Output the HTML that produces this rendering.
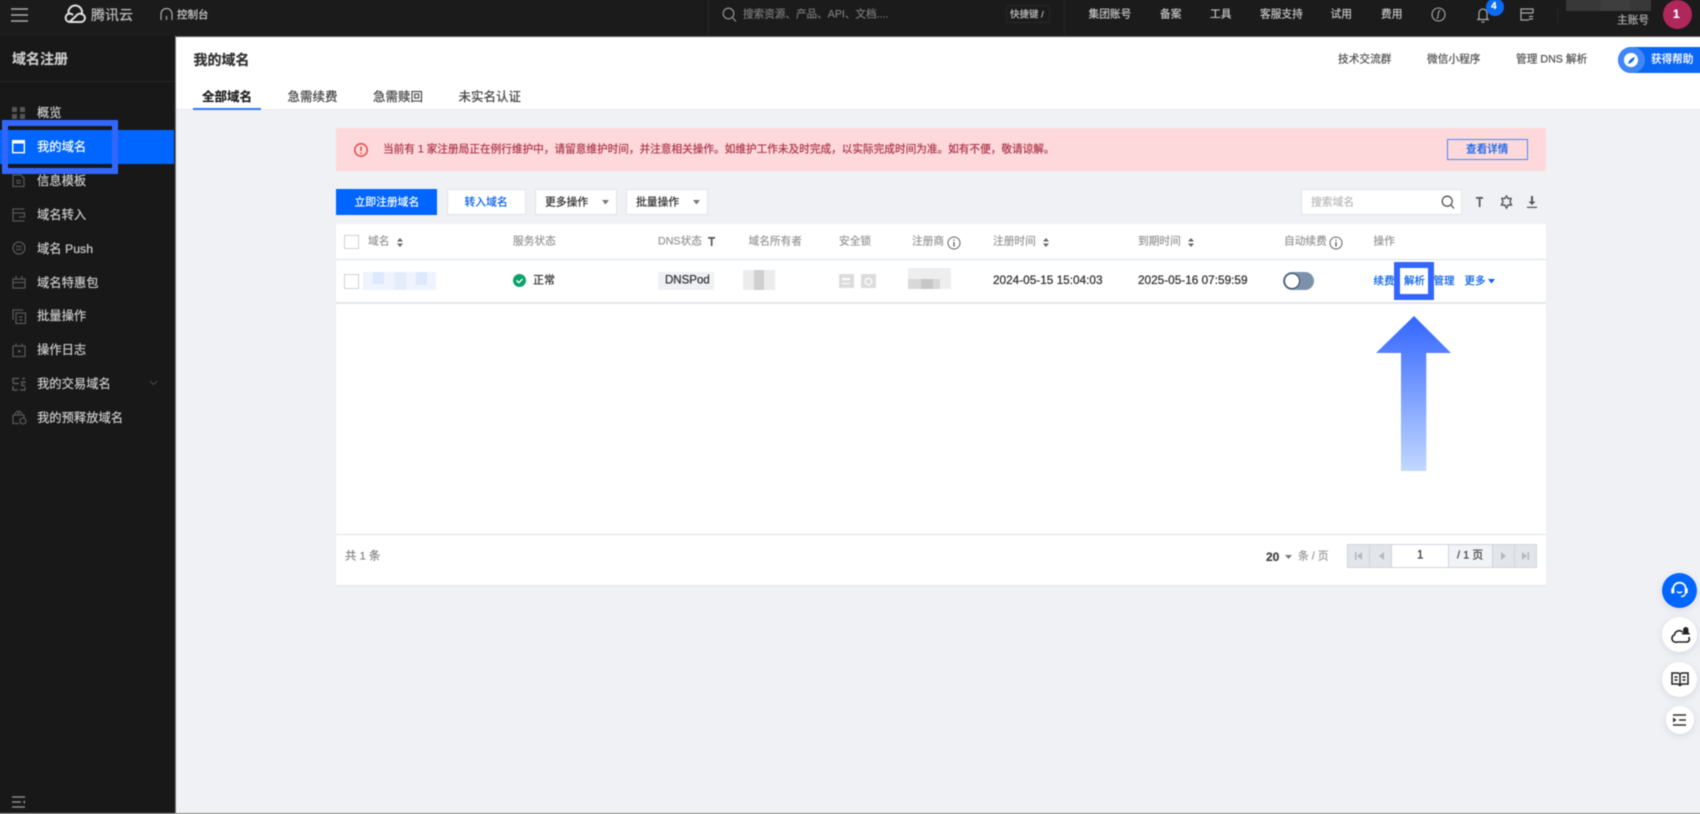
<!DOCTYPE html>
<html lang="zh-CN"><head><meta charset="utf-8"><title>我的域名</title>
<style>
*{box-sizing:border-box;margin:0;padding:0}
html{background:#f0f1f5}
html,body{width:1700px;height:814px;overflow:hidden}
body{position:relative;font-family:"Liberation Sans","Noto Sans CJK SC",sans-serif;font-size:12px;color:#333}
#w{position:absolute;left:0;top:0;width:1700px;height:814px;filter:blur(.4px)}
.a{position:absolute}
.t{position:absolute;white-space:nowrap;line-height:1;transform:translateY(-50%);text-shadow:0 0 .6px currentColor}
.m{font-size:12.3px;color:#c8c8c8;left:37px}
.n{font-size:10.7px;color:#c4c4c4;top:14.5px}
.h{font-size:10.7px;color:#999;top:242px}
.l{font-size:10.5px;color:#0b62e8;top:281px}
.r{font-size:10.7px;color:#555;top:60px}
.tb{font-size:12.5px;color:#444;top:97px}
svg{position:absolute;display:block;overflow:visible}
.b{position:absolute;top:189px;height:26px;background:#fff;border:1px solid #dfe3e9}
.p{position:absolute;top:544px;height:24px;background:#e2e5ea;border:1px solid #cfd5de}
</style></head><body><div id="w">

<!-- top bar -->
<div class="a" style="left:-6px;top:-6px;width:1712px;height:42px;background:#1b1b1b"></div>
<div class="a" style="left:-6px;top:36px;width:1712px;height:1px;background:#555"></div>
<svg style="left:11px;top:8px" width="18" height="14" fill="none" stroke="#aaa" stroke-width="1.4"><path d="M0 1h17M0 7h17M0 13h17"/></svg>
<svg style="left:64px;top:6px" width="22" height="17" viewBox="0 0 22 17" fill="none" stroke="#e2e2e2" stroke-width="2"><path d="M5.500 16H17a4 4 0 0 0 .8-7.900A6.800 6.800 0 1 0 4.600 7.800 4.200 4.200 0 0 0 5.500 16z"/><path d="M5.500 16l6.500-6a4.500 4.500 0 0 1 5.800-1.900M4.600 7.800A4.500 4.500 0 0 1 9 9"/></svg>
<div class="t" style="left:91px;top:15px;font-size:14px;color:#bbb">腾讯云</div>
<svg style="left:160px;top:8px" width="13" height="13" fill="none" stroke="#aaa" stroke-width="1.2"><path d="M1 12V6a5.500 5.500 0 0 1 11 0v6M6.500 8v4"/></svg>
<div class="t" style="left:177px;top:14.5px;font-size:10.5px;color:#ccc">控制台</div>
<div class="a" style="left:708px;top:-6px;width:1px;height:42px;background:#262626"></div>
<svg style="left:722px;top:7px" width="15" height="15" fill="none" stroke="#8a8a8a" stroke-width="1.300"><circle cx="6.500" cy="6.500" r="5.300"/><path d="M10.500 10.500l3.500 4"/></svg>
<div class="t" style="left:743px;top:14.5px;font-size:10.6px;color:#777">搜索资源、产品、API、文档....</div>
<div class="a" style="left:1006px;top:5px;width:44px;height:18px;border:1px solid #262626"></div>
<div class="t" style="left:1010px;top:14.5px;font-size:9.5px;color:#bbb">快捷键 /</div>
<div class="a" style="left:1064px;top:-6px;width:1px;height:42px;background:#262626"></div>
<div class="t n" style="left:1088.500px">集团账号</div>
<div class="t n" style="left:1160px">备案</div>
<div class="t n" style="left:1210px">工具</div>
<div class="t n" style="left:1260px">客服支持</div>
<div class="t n" style="left:1330.500px">试用</div>
<div class="t n" style="left:1381px">费用</div>
<svg style="left:1431px;top:7px" width="15" height="15" fill="none" stroke="#aaa" stroke-width="1.100"><circle cx="7.500" cy="7.500" r="6.500"/><path d="M9.500 3.500c-2 0-2 1.500-2.300 4S7 11.500 5.500 11.500"/></svg>
<svg style="left:1476px;top:7px" width="14" height="16" fill="none" stroke="#aaa" stroke-width="1.200"><path d="M1 12.500h12M3 12V6a4 4 0 0 1 8 0v6M5.500 15h3"/></svg>
<div class="a" style="left:1486px;top:-2px;width:18px;height:18px;border-radius:9px;background:#0a6bf2"></div>
<div class="t" style="left:1491px;top:7px;font-size:10px;font-weight:700;color:#fff">4</div>
<svg style="left:1520px;top:8px" width="14" height="13" fill="none" stroke="#aaa" stroke-width="1.200"><path d="M13 5V1H1v11h8M1 5h12M9 8.500h4M9 11h4"/></svg>
<div class="a" style="left:1557px;top:7px;width:1px;height:16px;background:#2a2a2a"></div>
<div class="a" style="left:1566px;top:-6px;width:85px;height:17px;background:#383838"></div>
<div class="a" style="left:1600px;top:-6px;width:30px;height:17px;background:#3e3e3e"></div>
<div class="t" style="left:1617px;top:21px;font-size:10.7px;color:#aaa">主账号</div>
<div class="a" style="left:1662.500px;top:0;width:29px;height:29px;border-radius:50%;background:#b0275b"></div>
<div class="t" style="left:1673px;top:14px;font-size:12px;font-weight:700;color:#fff">1</div>

<!-- sidebar -->
<div class="a" style="left:-6px;top:36px;width:181px;height:784px;background:#181818"></div>
<div class="a" style="left:175px;top:36px;width:1px;height:784px;background:#777"></div>
<div class="a" style="left:-6px;top:813px;width:1712px;height:6px;background:#999"></div>
<div class="a" style="left:0;top:81px;width:175px;height:1px;background:#282828"></div>
<div class="t" style="left:12px;top:58.500px;font-size:14px;font-weight:700;color:#c8c8c8">域名注册</div>
<div class="a" style="left:-6px;top:130px;width:180px;height:33.500px;background:#0066ff"></div>

<svg style="left:12px;top:107px" width="14" height="13" fill="#555"><path d="M0 0h5v5H0zM8 0h5v5H8zM0 7h5v5H0zM8 7h5v5H8z"/></svg>
<div class="t m" style="top:113px">概览</div>
<svg style="left:12px;top:140px" width="14" height="14"><rect x=".7" y=".7" width="11.600" height="12" fill="none" stroke="#fff" stroke-width="1.400"/><rect x="0" y="0" width="13" height="3.500" fill="#fff"/></svg>
<div class="t m" style="top:147px;color:#fff">我的域名</div>
<svg style="left:12px;top:174px" width="14" height="14" fill="none" stroke="#555" stroke-width="1.300"><path d="M1 1h8l3 3v8.500H1zM4 6.500h5M4 9h5"/></svg>
<div class="t m" style="top:181px">信息模板</div>
<svg style="left:12px;top:208px" width="14" height="14" fill="none" stroke="#555" stroke-width="1.300"><path d="M12.500 1H1v12h11.500M1 5h11.500v4H7"/></svg>
<div class="t m" style="top:215px">域名转入</div>
<svg style="left:12px;top:241px" width="15" height="15" fill="none" stroke="#555" stroke-width="1.300"><circle cx="7" cy="7" r="6"/><path d="M4 5.500h6M4 8.500h6"/></svg>
<div class="t m" style="top:248.500px">域名 Push</div>
<svg style="left:12px;top:275px" width="15" height="15" fill="none" stroke="#555" stroke-width="1.300"><path d="M1 4h12v9H1zM1 7.500h12M4 1v3M10 1v3"/></svg>
<div class="t m" style="top:282.500px">域名特惠包</div>
<svg style="left:12px;top:309px" width="15" height="15" fill="none" stroke="#555" stroke-width="1.300"><path d="M1 11V1h10M4 4h9.500v10.500H4zM7 8h3.500M7 11h3.500"/></svg>
<div class="t m" style="top:316px">批量操作</div>
<svg style="left:12px;top:343px" width="15" height="15" fill="none" stroke="#555" stroke-width="1.300"><path d="M1 3h12v10.500H1zM4 .500v3M10 .500v3"/><rect x="6" y="7" width="2.500" height="2.500" fill="#555" stroke="none"/></svg>
<div class="t m" style="top:350px">操作日志</div>
<svg style="left:12px;top:377px" width="15" height="15" fill="none" stroke="#555" stroke-width="1.500"><path d="M1 6V1.500h6M13 1.500h-3M1 6.500h6M13 6V5h-3v3.500h3M1 9v4h5M8 13h5V10"/></svg>
<div class="t m" style="top:384px">我的交易域名</div>
<svg style="left:149px;top:380px" width="9" height="6" fill="none" stroke="#444" stroke-width="1.200"><path d="M1 1l3.500 3.500L8 1"/></svg>
<svg style="left:12px;top:410px" width="15" height="15" fill="none" stroke="#555" stroke-width="1.300"><path d="M1 5h11v3M1 5v8.500h6M3 5c0-5 7-5 7 0M6.500 1v4"/><circle cx="11" cy="11" r="3" /></svg>
<div class="t m" style="top:417.500px">我的预释放域名</div>
<svg style="left:12px;top:796px" width="14" height="12" fill="none" stroke="#888" stroke-width="1.600"><path d="M0 1h13M0 6h9M0 11h13"/><path d="M13 4v4l-2-2z" fill="#888" stroke="none"/></svg>

<!-- blue highlight sidebar -->
<div class="a" style="left:2px;top:120px;width:116px;height:54px;border:6px solid #3366ff"></div>

<!-- header -->
<div class="a" style="left:176px;top:37px;width:1530px;height:72px;background:#fff"></div>
<div class="a" style="left:176px;top:109px;width:1530px;height:1px;background:#e8eaef"></div>
<div class="t" style="left:193.500px;top:60px;font-size:14px;font-weight:700;color:#333">我的域名</div>
<div class="t tb" style="left:202px;font-weight:700;color:#222">全部域名</div>
<div class="a" style="left:193px;top:108px;width:68px;height:2px;background:#2f7af0"></div>
<div class="t tb" style="left:287.500px">急需续费</div>
<div class="t tb" style="left:373px">急需赎回</div>
<div class="t tb" style="left:458.500px">未实名认证</div>
<div class="t r" style="left:1338px">技术交流群</div>
<div class="t r" style="left:1427px">微信小程序</div>
<div class="t r" style="left:1516px">管理 DNS 解析</div>
<div class="a" style="left:1618px;top:46.500px;width:88px;height:26px;border-radius:13px 0 0 13px;background:#0a66f5"></div>
<div class="a" style="left:1618px;top:46.500px;width:27px;height:26px;border-radius:13px;background:#3f86f7"></div>
<div class="a" style="left:1624px;top:53px;width:13.500px;height:13.500px;border-radius:50%;background:#fff"></div>
<svg style="left:1627.500px;top:56.500px" width="7" height="7"><path d="M7 0C4 .8 1 2.800 0 7c3-.8 6-3 7-7z" fill="#0a66f5"/></svg>
<div class="t" style="left:1651px;top:59.500px;font-size:10.600px;color:#fff;text-shadow:0 0 .9px #fff">获得帮助</div>

<!-- alert -->
<div class="a" style="left:336px;top:128px;width:1210px;height:43px;background:#fdd9dc"></div>
<svg style="left:354px;top:143px" width="15" height="15" fill="none" stroke="#e54545" stroke-width="1.500"><circle cx="7" cy="7" r="6.200"/><path d="M7 3.500v4.500M7 9.500v1.500"/></svg>
<div class="t" style="left:383px;top:150px;font-size:10.65px;color:#ad3a4c">当前有 1 家注册局正在例行维护中，请留意维护时间，并注意相关操作。如维护工作未及时完成，以实际完成时间为准。如有不便，敬请谅解。</div>
<div class="a" style="left:1447px;top:139px;width:80.500px;height:21px;border:1px solid #4f86f0"></div>
<div class="t" style="left:1466px;top:150px;font-size:10.600px;color:#0b62e8">查看详情</div>

<!-- toolbar -->
<div class="a" style="left:336px;top:189px;width:101px;height:26px;background:#0066ff"></div>
<div class="t" style="left:354.500px;top:203px;font-size:10.800px;color:#fff">立即注册域名</div>
<div class="b" style="left:446.500px;width:79.500px"></div>
<div class="t" style="left:464.500px;top:203px;font-size:10.800px;color:#0b62e8">转入域名</div>
<div class="b" style="left:535px;width:82px"></div>
<div class="t" style="left:545px;top:203px;font-size:10.800px;color:#333">更多操作</div>
<svg style="left:602px;top:200px" width="7" height="5" fill="#777"><path d="M0 0h7L3.500 4.500z"/></svg>
<div class="b" style="left:626px;width:81.500px"></div>
<div class="t" style="left:636px;top:203px;font-size:10.800px;color:#333">批量操作</div>
<svg style="left:693px;top:200px" width="7" height="5" fill="#777"><path d="M0 0h7L3.500 4.500z"/></svg>
<div class="b" style="left:1301px;width:160.500px"></div>
<div class="t" style="left:1311px;top:202.500px;font-size:10.800px;color:#bbb">搜索域名</div>
<svg style="left:1441px;top:195px" width="14" height="14" fill="none" stroke="#555" stroke-width="1.300"><circle cx="6.200" cy="6.200" r="5"/><path d="M10 10l3 3.500"/></svg>
<svg style="left:1475.500px;top:197px" width="7" height="10" fill="#555"><path d="M0 0h7v1.800H4.500V10H2.800V1.800H0z"/></svg>
<svg style="left:1500px;top:195px" width="13" height="14" fill="none" stroke="#555" stroke-width="1.400"><path d="M6.500 1l1.600 2.500h3L10 6.800l1.500 3.200h-3.400L6.500 13l-1.700-3H1.500L3 6.800 1.800 3.500h3z"/></svg>
<svg style="left:1527px;top:196px" width="10" height="12" fill="#555"><path d="M4 0h2v5.500H8.500L5 9 1.500 5.500H4zM0 10.800h10V12H0z"/></svg>

<!-- table -->
<div class="a" style="left:336px;top:224px;width:1210px;height:361px;background:#fff;box-shadow:0 1px 1px #e4e6eb"></div>
<div class="a" style="left:336px;top:258.500px;width:1210px;height:1px;background:#d9dee5"></div>
<div class="a" style="left:336px;top:302px;width:1210px;height:2px;background:#e3e6ec"></div>
<div class="a" style="left:336px;top:534px;width:1210px;height:1px;background:#dfe2e8"></div>
<div class="a" style="left:344px;top:235px;width:15px;height:14px;border:1px solid #ccd2da;background:#fff"></div>
<div class="t h" style="left:368px">域名</div>
<svg style="left:397px;top:238px" width="6" height="9" fill="#666"><path d="M3 0L6 3.500H0zM3 9L0 5.500h6z"/></svg>
<div class="t h" style="left:513px">服务状态</div>
<div class="t h" style="left:658px">DNS状态</div>
<svg style="left:707.500px;top:237px" width="7" height="9" fill="#555"><path d="M0 0h7v1.800H4.500V9H2.800V1.800H0z"/></svg>
<div class="t h" style="left:748.500px">域名所有者</div>
<div class="t h" style="left:839px">安全锁</div>
<div class="t h" style="left:912px">注册商</div>
<svg style="left:947px;top:235.500px" width="14" height="14" fill="none" stroke="#666"><circle cx="7" cy="7" r="6"/><path d="M7 6v4.500M7 3.500v1.300" stroke-width="1.400"/></svg>
<div class="t h" style="left:993px">注册时间</div>
<svg style="left:1043px;top:238px" width="6" height="9" fill="#666"><path d="M3 0L6 3.500H0zM3 9L0 5.500h6z"/></svg>
<div class="t h" style="left:1138px">到期时间</div>
<svg style="left:1188px;top:238px" width="6" height="9" fill="#666"><path d="M3 0L6 3.500H0zM3 9L0 5.500h6z"/></svg>
<div class="t h" style="left:1284px">自动续费</div>
<svg style="left:1329px;top:235.500px" width="14" height="14" fill="none" stroke="#666"><circle cx="7" cy="7" r="6"/><path d="M7 6v4.500M7 3.500v1.300" stroke-width="1.400"/></svg>
<div class="t h" style="left:1373.500px">操作</div>

<div class="a" style="left:344px;top:274px;width:15px;height:14.500px;border:1px solid #ccd2da;background:#fff"></div>
<!-- blur domain -->
<div class="a" style="left:363px;top:272px;width:73px;height:18px;background:#eef3fd"></div>
<div class="a" style="left:373px;top:272px;width:11px;height:12px;background:#dde8fc"></div>
<div class="a" style="left:395px;top:272px;width:11px;height:18px;background:#e4ecfc"></div>
<div class="a" style="left:416px;top:272px;width:11px;height:13px;background:#dde8fb"></div>
<svg style="left:513px;top:273.500px" width="13" height="13"><circle cx="6.500" cy="6.500" r="6.500" fill="#0aa36b"/><path d="M3.500 6.500l2.300 2.200 3.700-3.700" fill="none" stroke="#fff" stroke-width="1.400"/></svg>
<div class="t" style="left:533px;top:280.500px;font-size:11px;color:#333">正常</div>
<div class="a" style="left:658px;top:272px;width:56px;height:18px;background:#f0f1f5"></div>
<div class="t" style="left:665px;top:281px;font-size:11.500px;color:#333">DNSPod</div>
<div class="a" style="left:743px;top:270px;width:32px;height:20px;background:#ececec"></div>
<div class="a" style="left:754px;top:270px;width:10px;height:20px;background:#cfcfcf"></div>
<div class="a" style="left:839px;top:274px;width:14.500px;height:14px;background:#dcdcdc"></div>
<div class="a" style="left:842px;top:278px;width:8px;height:1.500px;background:#fff"></div>
<div class="a" style="left:842px;top:282.500px;width:8px;height:1.500px;background:#fff"></div>
<div class="a" style="left:861px;top:274px;width:14.500px;height:14px;background:#dcdcdc"></div>
<svg style="left:864px;top:277px" width="9" height="9" fill="none" stroke="#fff" stroke-width="1.300"><circle cx="4.500" cy="4.500" r="3.300"/></svg>
<div class="a" style="left:908px;top:268px;width:43px;height:21px;background:#eeeeee"></div>
<div class="a" style="left:908px;top:279px;width:32px;height:10px;background:#d8d8d8"></div>
<div class="a" style="left:921px;top:279px;width:12px;height:10px;background:#c6c6c6"></div>
<div class="t" style="left:993px;top:281px;font-size:11.800px;color:#333">2024-05-15 15:04:03</div>
<div class="t" style="left:1138px;top:281px;font-size:11.800px;color:#333">2025-05-16 07:59:59</div>
<div class="a" style="left:1282.500px;top:272px;width:31.500px;height:18px;border-radius:9px;background:#7c92ab"></div>
<div class="a" style="left:1283.500px;top:273px;width:16px;height:16px;border-radius:50%;background:#fff;border:1px solid #2d3d55"></div>
<div class="t l" style="left:1373.500px">续费</div>
<div class="t l" style="left:1404px">解析</div>
<div class="t l" style="left:1433.500px">管理</div>
<div class="t l" style="left:1464.500px">更多</div>
<svg style="left:1487.500px;top:278.500px" width="7" height="5" fill="#0b62e8"><path d="M0 0h7L3.500 4.500z"/></svg>
<div class="a" style="left:1394px;top:262px;width:40px;height:38px;border:6px solid #3366ff"></div>

<!-- arrow -->
<svg style="left:1376px;top:316px" width="75" height="155"><defs><linearGradient id="g" x1="0" y1="0" x2="0" y2="1"><stop offset="0" stop-color="#3366ff"/><stop offset="1" stop-color="#c2d8ff"/></linearGradient></defs><path d="M38 0L75 37H50.300V155H25V37H0z" fill="url(#g)"/></svg>

<!-- pagination -->
<div class="t" style="left:345px;top:556.500px;font-size:11.400px;color:#888">共 1 条</div>
<div class="t" style="left:1266px;top:556.500px;font-size:12px;font-weight:700;color:#444">20</div>
<svg style="left:1285px;top:555px" width="7" height="4" fill="#777"><path d="M0 0h7L3.500 4z"/></svg>
<div class="t" style="left:1298px;top:556.500px;font-size:10.800px;color:#999">条 / 页</div>
<div class="p" style="left:1347px;width:23px"></div>
<div class="p" style="left:1369px;width:23px"></div>
<div class="p" style="left:1391px;width:58px;background:#fff"></div>
<div class="p" style="left:1448px;width:45px;background:#f2f3f6"></div>
<div class="p" style="left:1492px;width:23px"></div>
<div class="p" style="left:1514px;width:23px"></div>
<svg style="left:1355px;top:552px" width="7" height="8" fill="#b5b8bd"><path d="M0 0h1.500v8H0zM7 0v8L2 4z"/></svg>
<svg style="left:1378px;top:552px" width="6" height="8" fill="#b5b8bd"><path d="M6 0v8L1 4z"/></svg>
<div class="t" style="left:1417px;top:556px;font-size:11.500px;color:#333">1</div>
<div class="t" style="left:1457px;top:556px;font-size:11px;color:#444">/ 1 页</div>
<svg style="left:1501px;top:552px" width="6" height="8" fill="#b5b8bd"><path d="M0 0v8l5-4z"/></svg>
<svg style="left:1522px;top:552px" width="7" height="8" fill="#b5b8bd"><path d="M0 0v8l5-4zM5.500 0H7v8H5.500z"/></svg>

<!-- float buttons -->
<div class="a" style="left:1662px;top:572.500px;width:35px;height:35px;border-radius:50%;background:#0066ff;box-shadow:0 2px 8px #d5d8df"></div>
<svg style="left:1670px;top:581px" width="19" height="18" fill="none" stroke="#fff" stroke-width="1.800"><path d="M3.200 8A6.300 6.300 0 1 1 15.800 8"/><rect x="1.300" y="7" width="3" height="5.500" rx="1" fill="#fff" stroke="none"/><rect x="14.700" y="7" width="3" height="5.500" rx="1" fill="#fff" stroke="none"/><path d="M7 10.500c1.300 1.600 3.700 1.600 5 0M15.500 12.500c-.5 2-2 3-4.500 3" stroke-width="1.500"/></svg>
<div class="a" style="left:1662px;top:617px;width:35px;height:35px;border-radius:50%;background:#fff;box-shadow:0 2px 8px #d5d8df"></div>
<svg style="left:1670.500px;top:626.500px" width="19" height="16" fill="none" stroke="#222" stroke-width="1.600"><path d="M6 15h9.500a2.800 2.800 0 0 0 2-4.800M11.500 5a4.800 4.800 0 0 0-8 2.800A3.700 3.700 0 0 0 6 15"/><path d="M14.800 0a2.700 2.700 0 0 1 2.700 2.900v3h1.200v1.600H11V5.900h1.100v-3A2.700 2.700 0 0 1 14.800 0z" fill="#222" stroke="none"/></svg>
<div class="a" style="left:1662px;top:661.500px;width:35px;height:35px;border-radius:50%;background:#fff;box-shadow:0 2px 8px #d5d8df"></div>
<svg style="left:1671px;top:672px" width="18" height="14" fill="none" stroke="#222" stroke-width="1.500"><path d="M1 1h6.500l1.500 1.500L10.500 1H17v11h-6l-2 1.500L7 12H1zM9 2.500v11M3.500 5h3M3.500 8h3M11.500 5h3M11.500 8h3"/></svg>
<div class="a" style="left:1665.500px;top:706px;width:28px;height:28px;border-radius:50%;background:#fff;box-shadow:0 2px 8px #d5d8df"></div>
<svg style="left:1673px;top:714px" width="13" height="12" fill="none" stroke="#333" stroke-width="1.400"><path d="M0 1h13M6 6h7M0 11h13"/><path d="M0 3.500v5L3.500 6z" fill="#333" stroke="none"/></svg>
</div></body></html>
